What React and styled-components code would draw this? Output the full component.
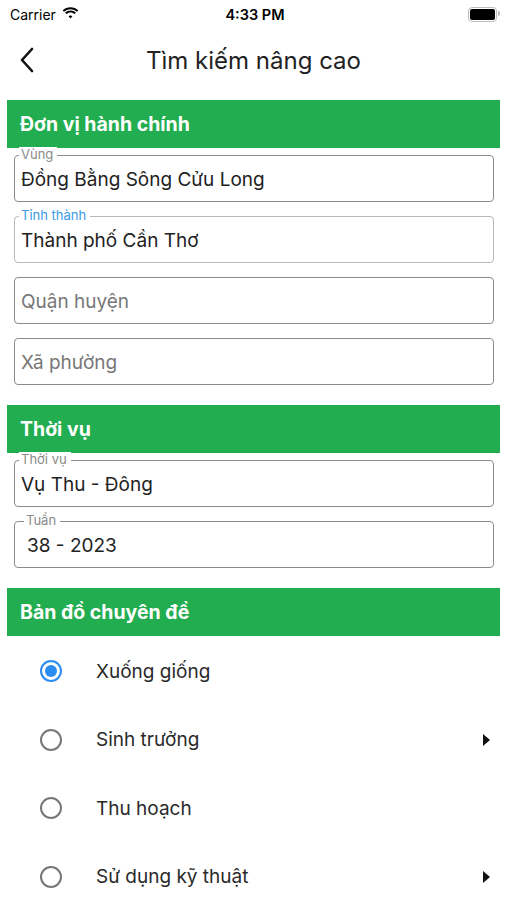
import React, { useState } from 'react';
import styled, { createGlobalStyle } from 'styled-components';

const GlobalStyle = createGlobalStyle`
  html, body {
    margin: 0;
    padding: 0;
    background: #fff;
  }
  body {
    font-family: Roboto, "Noto Sans", Arial, sans-serif;
    color: #222;
  }
`;

const GREEN = '#22ad50';

const sections = [
  {
    title: 'Đơn vị hành chính',
    fields: [
      { label: 'Vùng', value: 'Đồng Bằng Sông Cửu Long' },
      { label: 'Tỉnh thành', value: 'Thành phố Cần Thơ', focused: true },
      { placeholder: 'Quận huyện' },
      { placeholder: 'Xã phường' },
    ],
  },
  {
    title: 'Thời vụ',
    fields: [
      { label: 'Thời vụ', value: 'Vụ Thu - Đông' },
      { label: 'Tuần', value: '38 - 2023', indent: true },
    ],
  },
];

const options = [
  { name: 'Xuống giống' },
  { name: 'Sinh trưởng', more: true },
  { name: 'Thu hoạch' },
  { name: 'Sử dụng kỹ thuật', more: true },
];

const App = () => {
  const [ selected, setSelected ] = useState(0);

  return (
    <Root>
      <GlobalStyle />
      <StatusBar>
        <div className="left">
          Carrier
          <svg width="17" height="12" viewBox="0 0 17 12">
            <path d="M8.5 2.2c2.5 0 4.8 1 6.5 2.6l1.3-1.4C14.2 1.4 11.5.2 8.5.2S2.8 1.4.7 3.4L2 4.8c1.7-1.6 4-2.6 6.5-2.6z" fill="#000" />
            <path d="M8.5 5.4c1.6 0 3 .6 4.1 1.6l1.3-1.4C12.5 4.2 10.6 3.4 8.5 3.4s-4 .8-5.4 2.2L4.4 7c1.1-1 2.5-1.6 4.1-1.6z" fill="#000" />
            <path d="M8.5 8.5c.8 0 1.4.3 1.9.8L8.5 11.4 6.6 9.3c.5-.5 1.1-.8 1.9-.8z" fill="#000" />
          </svg>
        </div>
        <div className="time">4:33 PM</div>
        <Battery><span /></Battery>
      </StatusBar>

      <NavBar>
        <BackButton>
          <svg width="16" height="26" viewBox="0 0 16 26">
            <path d="M13 2L3 13l10 11" fill="none" stroke="#111" strokeWidth="2.6" strokeLinecap="round" strokeLinejoin="round" />
          </svg>
        </BackButton>
        <Title>Tìm kiếm nâng cao</Title>
      </NavBar>

      {sections.map(section => (
        <Section key={section.title}>
          <SectionHeader>{section.title}</SectionHeader>
          <Fields>
            {section.fields.map((field, i) => (
              <Field key={i} focused={field.focused}>
                {field.label && (
                  <FieldLabel focused={field.focused} indent={field.indent}>{field.label}</FieldLabel>
                )}
                {field.value
                  ? <FieldValue indent={field.indent}>{field.value}</FieldValue>
                  : <Placeholder>{field.placeholder}</Placeholder>}
              </Field>
            ))}
          </Fields>
        </Section>
      ))}

      <Section>
        <SectionHeader>Bản đồ chuyên đề</SectionHeader>
        <OptionList>
          {options.map((option, i) => (
            <OptionRow key={option.name} onClick={() => setSelected(i)}>
              <Radio checked={selected === i} />
              <OptionName>{option.name}</OptionName>
              {option.more && <Caret />}
            </OptionRow>
          ))}
        </OptionList>
      </Section>
    </Root>
  );
};

const Root = styled.div`
  width: 507px;
  height: 900px;
  overflow: hidden;
  background: #fff;
`;

const StatusBar = styled.div`
  height: 28px;
  display: grid;
  grid-template-columns: 1fr auto 1fr;
  align-items: center;
  padding: 0 7px 0 10px;
  font-family: Inter, "Liberation Sans", sans-serif;
  font-size: 14px;
  color: #000;
  > .left {
    display: flex;
    align-items: center;
    gap: 6px;
    svg { margin-top: -2px; }
  }
  > .time {
    font-weight: 600;
    font-size: 14.5px;
  }
`;

const Battery = styled.div`
  justify-self: end;
  position: relative;
  width: 25px;
  height: 11px;
  border: 1px solid #bcbcbc;
  border-radius: 4px;
  padding: 1px;
  margin-right: 3px;
  > span {
    display: block;
    height: 100%;
    background: #000;
    border-radius: 2px;
  }
  &::after {
    content: '';
    position: absolute;
    right: -4px;
    top: 3px;
    width: 2px;
    height: 5px;
    background: #bcbcbc;
    border-radius: 0 2px 2px 0;
  }
`;

const NavBar = styled.div`
  height: 64px;
  display: flex;
  align-items: center;
  justify-content: center;
  position: relative;
`;

const BackButton = styled.div`
  position: absolute;
  left: 19px;
  top: 19px;
  display: flex;
`;

const Title = styled.div`
  font-family: Inter, "Liberation Sans", sans-serif;
  font-size: 24px;
  color: #222;
`;

const Section = styled.div`
  margin: 8px 7px 0;
`;

const SectionHeader = styled.div`
  height: 48px;
  background: ${GREEN};
  display: flex;
  align-items: center;
  padding-left: 13px;
  color: #fff;
  font-family: Inter, "Liberation Sans", sans-serif;
  font-weight: 700;
  font-size: 19.5px;
`;

const Fields = styled.div`
  display: flex;
  flex-direction: column;
  gap: 14px;
  padding: 7px 6px 12px 7px;
`;

const Field = styled.div`
  position: relative;
  height: 47px;
  border: 1.5px solid ${({ focused }) => (focused ? '#b8b8b8' : '#8a8a8a')};
  border-radius: 4px;
  box-sizing: border-box;
  display: flex;
  align-items: center;
  padding: 0 6px;
`;

const FieldLabel = styled.div`
  position: absolute;
  left: ${({ indent }) => (indent ? '9px' : '4px')};
  top: -9px;
  padding: 0 4px 0 2px;
  background: #fff;
  font-family: Inter, "Liberation Sans", sans-serif;
  font-size: 13px;
  line-height: 15px;
  color: ${({ focused }) => (focused ? '#3a9ae8' : '#8a8a8a')};
`;

const FieldValue = styled.div`
  font-family: Inter, "Liberation Sans", sans-serif;
  font-size: 19px;
  color: #222;
  margin-top: 2px;
  padding-left: ${({ indent }) => (indent ? '6px' : '0')};
`;

const Placeholder = styled(FieldValue)`
  color: #777;
`;

const OptionList = styled.div`
  display: flex;
  flex-direction: column;
  padding-top: 1px;
`;

const OptionRow = styled.div`
  height: 68.5px;
  display: flex;
  align-items: center;
  padding-left: 33px;
  padding-right: 10px;
  cursor: pointer;
`;

const Radio = styled.div`
  width: 22px;
  height: 22px;
  box-sizing: border-box;
  border-radius: 50%;
  border: 2px solid ${({ checked }) => (checked ? '#2b8cf0' : '#777')};
  display: flex;
  align-items: center;
  justify-content: center;
  &::after {
    content: '';
    width: 12px;
    height: 12px;
    border-radius: 50%;
    background: ${({ checked }) => (checked ? '#2b8cf0' : 'transparent')};
  }
`;

const OptionName = styled.div`
  flex: 1;
  margin-left: 34px;
  font-family: Inter, "Liberation Sans", sans-serif;
  font-size: 19px;
  color: #2a2a2a;
`;

const Caret = styled.div`
  width: 0;
  height: 0;
  border-top: 6px solid transparent;
  border-bottom: 6px solid transparent;
  border-left: 7px solid #111;
`;

export default App;
